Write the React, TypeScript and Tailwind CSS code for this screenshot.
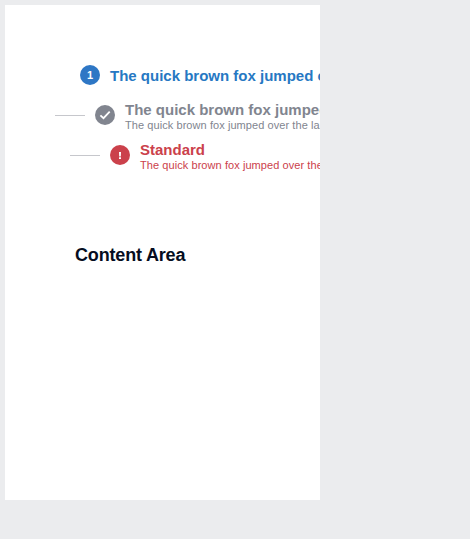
import type { ReactNode } from "react";

type StepProps = {
  className: string;
  badge: string;
  icon: ReactNode;
  title: string;
  detail?: string;
  connector?: boolean;
};

function Step({ className, badge, icon, title, detail, connector }: StepProps) {
  return (
    <li className={`flex h-10 items-center whitespace-nowrap ${className}`}>
      {connector && <span className="mr-2.5 h-px w-[30px] shrink-0 bg-[#c6c7cc]" />}
      <span className={`mr-2.5 flex size-5 shrink-0 items-center justify-center rounded-full text-white ${badge}`}>
        {icon}
      </span>
      <span className="flex flex-col pt-0.5">
        <span className="text-[15px] leading-[18px] font-bold">{title}</span>
        {detail && <span className="text-[11px] leading-[13px] tracking-[0.07px]">{detail}</span>}
      </span>
    </li>
  );
}

const SENTENCE = "The quick brown fox jumped over the lazy dog";

export default function App() {
  return (
    <div className="h-[539px] w-[470px] overflow-hidden bg-[#ebecee] p-[5px] font-['Liberation_Sans',Arial,sans-serif]">
      <main className="h-[495px] w-[315px] overflow-hidden bg-white pt-[50px]">
        <ol>
          <Step
            className="pl-[75px] text-[#2678c3]"
            badge="bg-[#2e77c5]"
            icon={<span className="text-[11px] leading-none font-bold">1</span>}
            title={SENTENCE}
          />
          <Step
            className="pl-[50px] text-[#81858f]"
            badge="bg-[#81858f]"
            connector
            icon={
              <svg viewBox="0 0 20 20" className="size-5" fill="none" stroke="currentColor" strokeWidth="1.8">
                <path d="M5.4 10.3 8.5 13.2 14.7 6.7" />
              </svg>
            }
            title={SENTENCE}
            detail={SENTENCE}
          />
          <Step
            className="pl-[65px] text-[#cb414b]"
            badge="bg-[#cb414b]"
            connector
            icon={
              <svg viewBox="0 0 20 20" className="size-5" fill="currentColor">
                <path d="M9 7h2l-.2 4.4H9.2zM9 12.2h2v1.7H9z" />
              </svg>
            }
            title="Standard"
            detail={SENTENCE}
          />
        </ol>
        <h1 className="mt-[70px] ml-[70px] text-lg leading-5 font-bold tracking-[-0.17px] text-[#050d21]">
          Content Area
        </h1>
      </main>
    </div>
  );
}
